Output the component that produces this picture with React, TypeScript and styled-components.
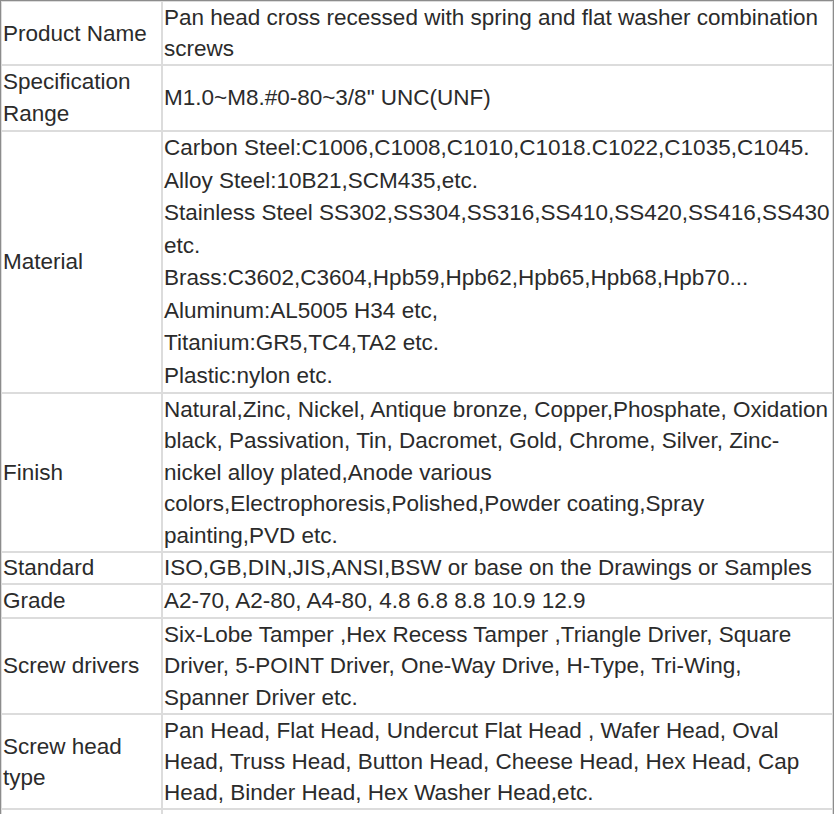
import React from 'react'
import styled, { createGlobalStyle } from 'styled-components'

const GlobalStyle = createGlobalStyle`
  body {
    margin: 0;
    background: #ffffff;
    font-family: 'Liberation Sans', Arial, sans-serif;
  }
`

type SpecRow = {
  label: React.ReactNode
  value: React.ReactNode
  lineHeight?: number
}

const rows: SpecRow[] = [
  {
    label: 'Product Name',
    value: 'Pan head cross recessed with spring and flat washer combination screws',
  },
  {
    label: 'Specification Range',
    lineHeight: 32,
    value: 'M1.0~M8.#0-80~3/8" UNC(UNF)',
  },
  {
    label: 'Material',
    lineHeight: 32.5,
    value: (
      <>
        Carbon Steel:C1006,C1008,C1010,C1018.C1022,C1035,C1045.
        <br />
        Alloy Steel:10B21,SCM435,etc.
        <br />
        Stainless Steel SS302,SS304,SS316,SS410,SS420,SS416,SS430 etc.
        <br />
        Brass:C3602,C3604,Hpb59,Hpb62,Hpb65,Hpb68,Hpb70...
        <br />
        Aluminum:AL5005 H34 etc,
        <br />
        Titanium:GR5,TC4,TA2 etc.
        <br />
        Plastic:nylon etc.
      </>
    ),
  },
  {
    label: 'Finish',
    lineHeight: 31.4,
    value:
      'Natural,Zinc, Nickel, Antique bronze, Copper,Phosphate, Oxidation black, Passivation, Tin, Dacromet, Gold, Chrome, Silver, Zinc-nickel alloy plated,Anode various colors,Electrophoresis,Polished,Powder coating,Spray painting,PVD etc.',
  },
  {
    label: 'Standard',
    lineHeight: 30,
    value: 'ISO,GB,DIN,JIS,ANSI,BSW or base on the Drawings or Samples',
  },
  {
    label: 'Grade',
    lineHeight: 32,
    value: 'A2-70, A2-80, A4-80, 4.8 6.8 8.8 10.9 12.9',
  },
  {
    label: 'Screw drivers',
    lineHeight: 31.34,
    value:
      'Six-Lobe Tamper ,Hex Recess Tamper ,Triangle Driver, Square Driver, 5-POINT Driver, One-Way Drive, H-Type, Tri-Wing, Spanner Driver etc.',
  },
  {
    label: 'Screw head type',
    value:
      'Pan Head, Flat Head, Undercut Flat Head , Wafer Head, Oval Head, Truss Head, Button Head, Cheese Head, Hex Head, Cap Head, Binder Head, Hex Washer Head,etc.',
  },
  {
    // next row only shows its top border at the bottom edge
    label: '\u00a0',
    lineHeight: 34,
    value: '\u00a0',
  },
]

const App: React.FC = () => {
  return (
    <>
      <GlobalStyle />
      <SpecTable>
        <tbody>
          {rows.map((row, index) => (
            <tr key={index}>
              <LabelCell $lineHeight={row.lineHeight ?? 31}>{row.label}</LabelCell>
              <ValueCell $lineHeight={row.lineHeight ?? 31}>{row.value}</ValueCell>
            </tr>
          ))}
        </tbody>
      </SpecTable>
    </>
  )
}
export default App

const SpecTable = styled.table`
  width: 834px;
  border: 1px solid #8c8c8c;
  border-collapse: separate;
  border-spacing: 0;
  table-layout: fixed;
  color: #2b2b2b;
  font-family: 'Liberation Sans', Arial, sans-serif;
  font-size: 22.5px;
`

const Cell = styled.td<{ $lineHeight: number }>`
  border: 1px solid #dcdcdc;
  padding: 0 1px;
  vertical-align: middle;
  line-height: ${(p) => p.$lineHeight}px;
  text-align: left;
`

const LabelCell = styled(Cell)`
  width: 157px;
`

const ValueCell = styled(Cell)`
  word-break: normal;
`
